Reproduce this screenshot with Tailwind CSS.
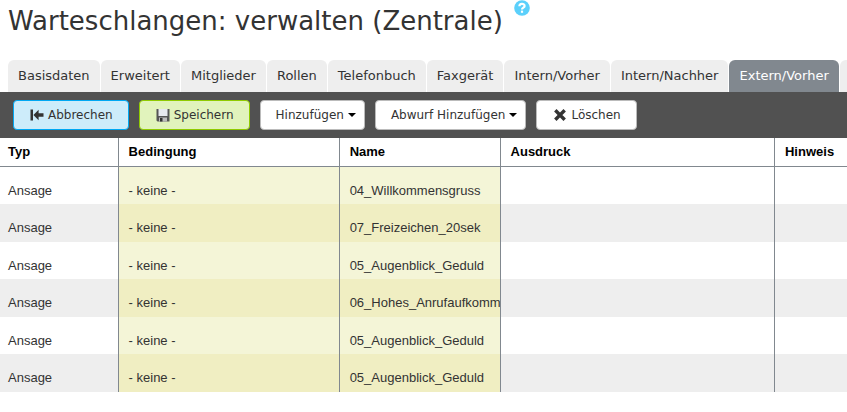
<!DOCTYPE html>
<html lang="de">

<head>
  <meta charset="UTF-8">
  <meta name="viewport" content="width=device-width, initial-scale=1.0">
  <title>Warteschlangen: verwalten (Zentrale)</title>
  <script src="https://cdn.jsdelivr.net/npm/@tailwindcss/browser@4"></script>
</head>

<body class="bg-white text-[#333] font-['DejaVu_Sans',sans-serif] overflow-x-hidden">
  <header class="flex items-start gap-[11px] px-2 h-[60px]">
    <h1 class="text-[26px] leading-[42px] whitespace-nowrap">Warteschlangen: verwalten (Zentrale)</h1>
    <a href="#" aria-label="Hilfe">
      <svg class="w-4 h-4" viewBox="0 0 16 16">
        <circle cx="8" cy="8" r="7.8" fill="#5bd0fb" />
        <path d="M5.4 6.2C5.4 3.2 10.6 3.2 10.6 6C10.6 7.8 8 7.6 8 9.6" fill="none" stroke="#fff" stroke-width="2.2" />
        <rect x="6.9" y="10.6" width="2.2" height="2.2" fill="#fff" />
      </svg>
    </a>
  </header>

  <!-- Tabs -->
  <nav class="flex gap-px pl-2 h-8 overflow-hidden text-[13px] leading-8 whitespace-nowrap">
    <a href="#" class="shrink-0 px-[10px] bg-[#eee] rounded-t-md">Basisdaten</a>
    <a href="#" class="shrink-0 px-[10px] bg-[#eee] rounded-t-md">Erweitert</a>
    <a href="#" class="shrink-0 px-[10px] bg-[#eee] rounded-t-md">Mitglieder</a>
    <a href="#" class="shrink-0 px-[10px] bg-[#eee] rounded-t-md">Rollen</a>
    <a href="#" class="shrink-0 px-[10px] bg-[#eee] rounded-t-md">Telefonbuch</a>
    <a href="#" class="shrink-0 px-[10px] bg-[#eee] rounded-t-md">Faxgerät</a>
    <a href="#" class="shrink-0 px-[10px] bg-[#eee] rounded-t-md">Intern/Vorher</a>
    <a href="#" class="shrink-0 px-[10px] bg-[#eee] rounded-t-md">Intern/Nachher</a>
    <a href="#" class="shrink-0 px-[10px] bg-[#81888f] text-white rounded-t-md" aria-current="page">Extern/Vorher</a>
    <a href="#" class="shrink-0 w-24 bg-[#eee] rounded-t-md" aria-label="Weiter"></a>
  </nav>

  <!-- Toolbar -->
  <div class="flex gap-[10px] px-[13px] py-2 bg-[#515151] text-xs whitespace-nowrap">
    <button class="flex items-center gap-1 h-[30px] pl-4 pr-[15px] rounded border border-[#00a8f3] bg-[#cdecfa]">
      <svg class="w-[14px] h-3" viewBox="0 0 14 12" fill="#333">
        <path d="M0.5 0.5H3V11.5H0.5ZM3.4 6L8.6 0.8V4.3H13.5V7.7H8.6V11.2Z" />
      </svg>
      Abbrechen
    </button>
    <button class="flex items-center gap-1 h-[30px] pl-4 pr-[15px] rounded border border-[#8fcb00] bg-[#e1f3bc]">
      <svg class="w-[14px] h-[14px]" viewBox="0 0 14 14">
        <path d="M0.5 1H13.5V13.5H1.5L0.5 12.5Z" fill="#555" />
        <rect x="2.5" y="1" width="9" height="7" fill="#e6e8ee" />
        <rect x="3" y="9.5" width="8" height="4" fill="#bbb" />
        <rect x="4" y="10" width="2.5" height="3.5" fill="#333" />
      </svg>
      Speichern
    </button>
    <button class="flex items-center gap-1 h-[30px] pl-[15px] pr-2 rounded border border-[#bbb] bg-white">
      Hinzufügen
      <svg class="w-2 h-1" viewBox="0 0 8 4"><path d="M0 0H8L4 4Z" fill="#000" /></svg>
    </button>
    <button class="flex items-center gap-1 h-[30px] pl-[15px] pr-2 rounded border border-[#bbb] bg-white">
      Abwurf Hinzufügen
      <svg class="w-2 h-1" viewBox="0 0 8 4"><path d="M0 0H8L4 4Z" fill="#000" /></svg>
    </button>
    <button class="flex items-center gap-1 h-[30px] pl-4 pr-[15px] rounded border border-[#bbb] bg-white">
      <svg class="w-[14px] h-3" viewBox="0 0 14 12">
        <path d="M2.3 1.3L11.7 10.7M11.7 1.3L2.3 10.7" stroke="#333" stroke-width="3.4" />
      </svg>
      Löschen
    </button>
  </div>

  <table class="w-full table-fixed border-separate border-spacing-0 text-[13px] leading-4 text-left font-['Liberation_Sans',Arial,sans-serif]">
    <colgroup>
      <col class="w-[14%]">
      <col class="w-[26.1%]">
      <col class="w-[19%]">
      <col class="w-[32.4%]">
      <col>
    </colgroup>
    <thead class="text-black">
      <tr class="h-[29px]">
        <th class="pl-2 border-r border-b border-[#81888f]">Typ</th>
        <th class="pl-[10px] border-r border-b border-[#81888f]">Bedingung</th>
        <th class="pl-[10px] border-r border-b border-[#81888f]">Name</th>
        <th class="pl-[10px] border-r border-b border-[#81888f]">Ausdruck</th>
        <th class="pl-[10px] border-b border-[#81888f]">Hinweis</th>
      </tr>
    </thead>
    <tbody id="rows"></tbody>
  </table>

  <script>
    const names = [
      "04_Willkommensgruss",
      "07_Freizeichen_20sek",
      "05_Augenblick_Geduld",
      "06_Hohes_Anrufaufkommen",
      "05_Augenblick_Geduld",
      "05_Augenblick_Geduld",
    ];

    document.getElementById("rows").innerHTML = names.map((name, i) => {
      const odd = i % 2 === 1;
      const row = odd ? "h-[38px] bg-[#eee]" : "h-[37px] bg-white";
      const marked = odd ? "bg-[#f0eec2]" : "bg-[#f4f5d7]";
      return `<tr class="${row}">
        <td class="pt-[10px] pl-2 border-r border-[#81888f]">Ansage</td>
        <td class="pt-[10px] pl-[10px] border-r border-[#81888f] ${marked}">- keine -</td>
        <td class="pt-[10px] pl-[10px] border-r border-[#81888f] overflow-hidden whitespace-nowrap ${marked}">${name}</td>
        <td class="border-r border-[#81888f]"></td>
        <td></td>
      </tr>`;
    }).join("");
  </script>
</body>

</html>
